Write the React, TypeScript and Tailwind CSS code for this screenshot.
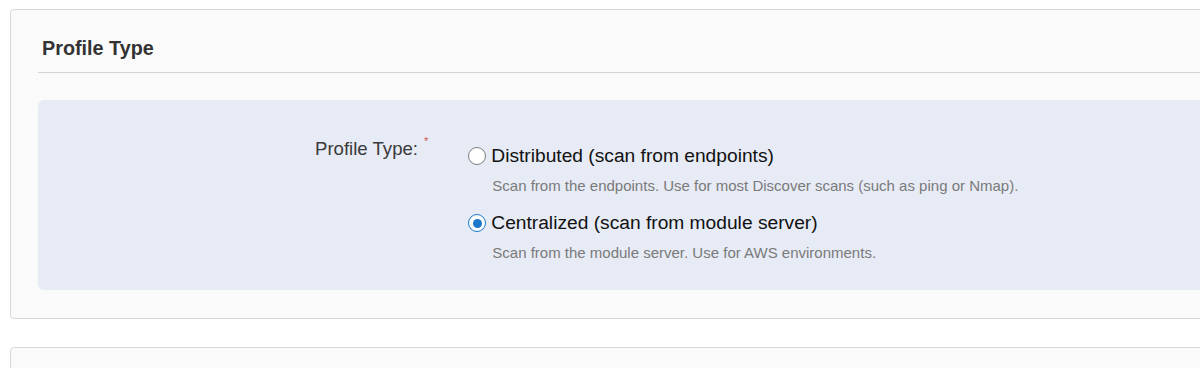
import React, { useState } from 'react'

const options = [
    {
        id: 'distributed',
        label: 'Distributed (scan from endpoints)',
        help: 'Scan from the endpoints. Use for most Discover scans (such as ping or Nmap).',
    },
    {
        id: 'centralized',
        label: 'Centralized (scan from module server)',
        help: 'Scan from the module server. Use for AWS environments.',
    },
]

function Radio({ checked }: { checked: boolean }) {
    if (checked) {
        return (
            <span className="w-[18px] h-[18px] rounded-full border-[1.5px] border-[#1b78cc] bg-white flex items-center justify-center shrink-0">
                <span className="w-[9px] h-[9px] rounded-full bg-[#1b78cc]" />
            </span>
        )
    }
    return <span className="w-[18px] h-[18px] rounded-full border border-[#7d7d7d] bg-white shrink-0" />
}

export default function App() {
    const [selected, setSelected] = useState('centralized')

    return (
        <div className="w-[1200px] h-[368px] overflow-hidden bg-white font-['Liberation_Sans',Arial,sans-serif]">
            <div className="w-[1240px] pt-[9px] pl-[10px]">
                {/* Profile Type card */}
                <div className="border border-[#d7d7dc] rounded-[4px] bg-[#fafafa] pt-[26px] pb-[28px] pl-[27px]">
                    <div className="border-b border-[#d3d3d8] pb-[12px]">
                        <h2 className="pl-[4px] text-[19.8px] leading-[24px] font-bold text-[#333]">Profile Type</h2>
                    </div>

                    <div className="mt-[27px] bg-[#e7ebf5] rounded-l-[6px] h-[190px] pt-[38px] flex">
                        <div className="w-[380px] text-right text-[18.6px] leading-[22px] text-[#3a3a3a]">
                            Profile Type:
                        </div>
                        <span className="ml-[6px] -mt-[5px] text-[11px] leading-[16px] text-[#d9534f]">*</span>

                        <div className="ml-[40px] mt-[6px] flex flex-col">
                            {options.map((opt, i) => (
                                <div key={opt.id} className={i > 0 ? 'mt-[15px]' : ''}>
                                    <label
                                        className="flex items-center gap-[5px] h-[24px] cursor-pointer"
                                        onClick={() => setSelected(opt.id)}
                                    >
                                        <Radio checked={selected === opt.id} />
                                        <span className="text-[19.2px] leading-[24px] text-[#111]">{opt.label}</span>
                                    </label>
                                    <p className="mt-[8px] ml-[24px] text-[15px] leading-[20px] text-[#7a7a7a]">{opt.help}</p>
                                </div>
                            ))}
                        </div>
                    </div>
                </div>

                {/* Next card */}
                <div className="mt-[28px] h-[60px] border border-[#d7d7dc] rounded-[4px] bg-[#fafafa]" />
            </div>
        </div>
    )
}
